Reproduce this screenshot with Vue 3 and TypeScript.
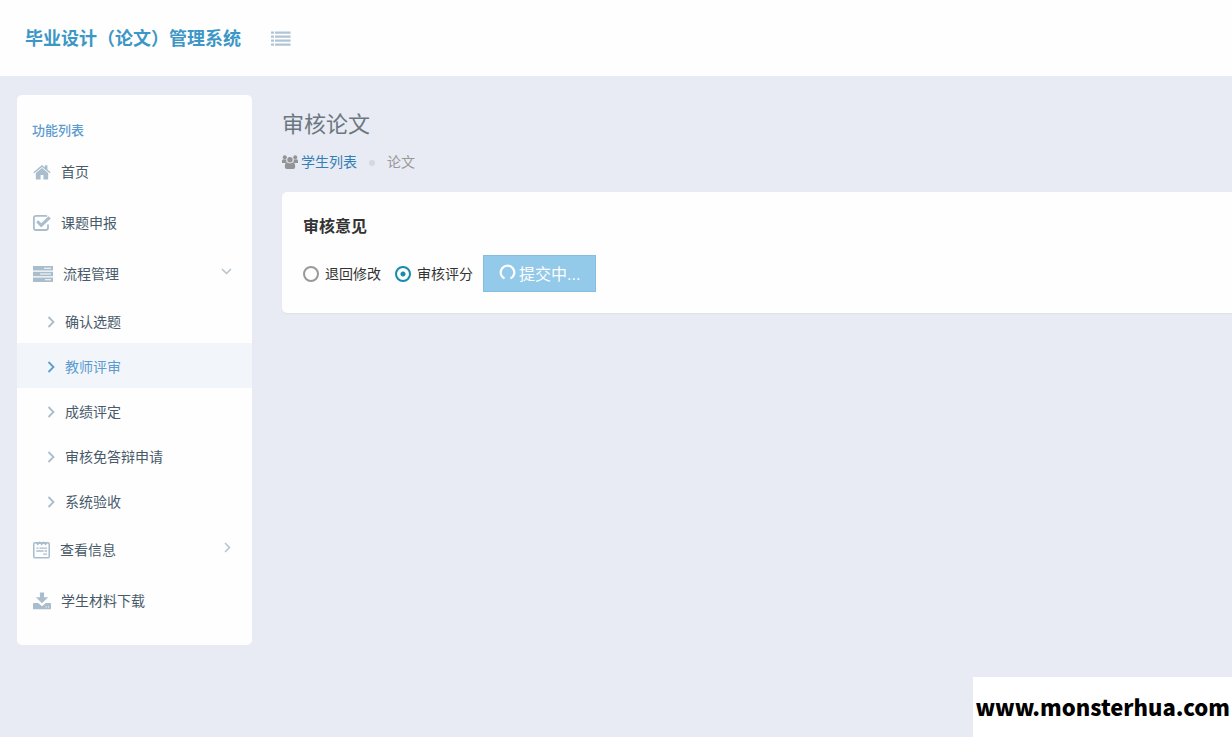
<script setup lang="ts">
import { ref } from 'vue'

interface SubItem {
  label: string
  active?: boolean
}

interface MenuItem {
  label: string
  icon: 'home' | 'check' | 'server' | 'note' | 'download'
  children?: SubItem[]
  open?: boolean
}

const menu = ref<MenuItem[]>([
  { label: '首页', icon: 'home' },
  { label: '课题申报', icon: 'check' },
  {
    label: '流程管理',
    icon: 'server',
    open: true,
    children: [
      { label: '确认选题' },
      { label: '教师评审', active: true },
      { label: '成绩评定' },
      { label: '审核免答辩申请' },
      { label: '系统验收' },
    ],
  },
  { label: '查看信息', icon: 'note', children: [], open: false },
  { label: '学生材料下载', icon: 'download' },
])

const decision = ref<'return' | 'score'>('score')
</script>

<template>
  <div class="page">
    <header class="topbar">
      <a class="brand" href="#">毕业设计（论文）管理系统</a>
      <button class="toggle" type="button" aria-label="切换菜单">
        <svg width="20" height="16" viewBox="0 0 20 16">
          <path d="M0 .5h3v2.300H0zM4 .5h15.500v2.300H4zM0 4.500h3v2.300H0zM4 4.500h15.500v2.300H4zM0 8.500h3v2.300H0zM4 8.500h15.500v2.300H4zM0 12.500h3v2.300H0zM4 12.500h15.500v2.300H4z" />
        </svg>
      </button>
    </header>

    <div class="body">
      <nav class="sidebar">
        <h2 class="side-title">功能列表</h2>
        <ul class="menu">
          <li v-for="item in menu" :key="item.label">
            <a class="item" href="#">
              <svg v-if="item.icon === 'home'" class="icon" width="18" height="16" viewBox="0 0 19 16">
                <path d="M9.500 3.700 3 9v6.200q0 .6.6.6H8v-4.600h3v4.600h4.400q.6 0 .6-.6V9z" />
                <path d="M.4 8.200 9.500.7l3 2.500V1h2.700v4.400l3.400 2.800-.9 1.100L9.500 2.600 1.300 9.300z" />
              </svg>
              <svg v-else-if="item.icon === 'check'" class="icon" width="18" height="16" viewBox="0 0 18 16">
                <path d="M15 9.500v3.200q0 2.300-2.300 2.300H3.200Q.9 15 .9 12.700V3.200Q.9.900 3.200.900h9.500q.8 0 1.400.3" fill="none" stroke="currentColor" stroke-width="1.800" />
                <path d="m3.200 7.300 2-2 3 3 7.300-7.100 2.300 2.200L8.200 12.600z" />
              </svg>
              <svg v-else-if="item.icon === 'server'" class="icon" width="20" height="16" viewBox="0 0 20 16">
                <path fill-rule="evenodd" d="M0 0h20v4.500H0zM11 1.700v1.100h7V1.700zM0 5.700h20v4.600H0zM7 7.500v1.100h11V7.500zM0 11.500h20V16H0zM12 13.200v1.100h6v-1.100z" />
              </svg>
              <svg v-else-if="item.icon === 'note'" class="icon" width="17" height="18" viewBox="0 0 17.600 18">
                <rect x=".8" y="1.500" width="16" height="15.500" rx="1" fill="none" stroke="currentColor" stroke-width="1.600" />
                <path d="m3 1 2 2.300L7 1l2 2.300L11 1l2 2.300L15 1M3.500 7h2.200m1 0h7.800M3.500 10h7.500m1 0h2.500M10.500 13.300h4" fill="none" stroke="currentColor" stroke-width="1.400" />
              </svg>
              <svg v-else class="icon" width="18" height="18" viewBox="0 0 19 18">
                <path d="M7.300 0h4.400v5h4.300L9.500 11.500 3 5h4.300z" />
                <path fill-rule="evenodd" d="M1 11h4.500l4 3.500 4-3.500H18q1 0 1 1v4.800q0 1-1 1H1q-1 0-1-1V12q0-1 1-1zm12.400 3.900v1h1v-1zm2.500 0v1h1v-1z" />
              </svg>
              <span>{{ item.label }}</span>
              <svg v-if="item.children" class="arrow" width="11" height="11" viewBox="0 0 11 11">
                <path :d="item.open ? 'm1 3 4.500 4.500L10 3' : 'm4 1 4.500 4.500L4 10'" />
              </svg>
            </a>
            <ul v-if="item.open" class="submenu">
              <li v-for="sub in item.children" :key="sub.label">
                <a class="sub" :class="{ active: sub.active }" href="#">
                  <svg class="chevron" width="8" height="12" viewBox="0 0 8 12"><path d="m1.500 1 5 5-5 5" /></svg>
                  <span>{{ sub.label }}</span>
                </a>
              </li>
            </ul>
          </li>
        </ul>
      </nav>

      <main class="main">
        <h1 class="title">审核论文</h1>
        <nav class="crumbs" aria-label="路径">
          <svg class="users" width="16" height="14" viewBox="0 0 16 14">
            <circle cx="2.800" cy="2.300" r="2" />
            <circle cx="13.200" cy="2.300" r="2" />
            <path d="M0 8V5.800q0-1.500 1.500-1.500l3 .3q-.8 1.800.5 3.400zM16 8V5.800q0-1.500-1.500-1.500l-3 .3q.8 1.800-.5 3.400z" />
            <circle cx="8" cy="4.700" r="2.700" />
            <path d="M5.300 7.600Q8 9.200 10.700 7.600 13.200 7.800 13.200 11.500q0 2.500-2 2.500H4.800q-2 0-2-2.500 0-3.700 2.500-3.900z" />
          </svg>
          <a class="crumb-link" href="#">学生列表</a>
          <i class="dot"></i>
          <span>论文</span>
        </nav>

        <section class="card">
          <h3 class="card-title">审核意见</h3>
          <form class="review" @submit.prevent>
            <label class="option"><input v-model="decision" type="radio" name="decision" value="return" />退回修改</label>
            <label class="option"><input v-model="decision" type="radio" name="decision" value="score" />审核评分</label>
            <button class="submit" type="submit">
              <svg width="17" height="17" viewBox="0 0 17 17"><path d="M5.500 14.600A6.800 6.800 0 1 1 11.500 14.600" /></svg>
              <span>提交中...</span>
            </button>
          </form>
        </section>
      </main>
    </div>

    <footer class="site-mark">www.monsterhua.com</footer>
  </div>
</template>

<style>
body {
  margin: 0;
  background: #e8ebf3;
}
</style>

<style scoped>
.page {
  min-height: 100vh;
  background: #e8ebf3;
  color: #333;
  font-family: "Liberation Sans", "Noto Sans CJK SC", sans-serif;
  font-size: 14px;
  line-height: 20px;
}
.page * {
  box-sizing: border-box;
}
a {
  color: inherit;
  text-decoration: none;
}
ul {
  list-style: none;
  margin: 0;
  padding: 0;
}
h1, h2, h3 {
  margin: 0;
}
svg {
  display: block;
  flex: none;
  fill: currentColor;
}
.topbar {
  display: flex;
  align-items: center;
  gap: 30px;
  height: 76px;
  padding: 2px 25px 0;
  background: #fefefe;
}
.brand {
  color: #3c97c6;
  font-size: 18px;
  font-weight: 700;
}
.toggle {
  border: 0;
  padding: 0;
  background: none;
  color: #b0c4d3;
}
.body {
  display: flex;
  align-items: flex-start;
  gap: 30px;
  padding: 19px 0 0 17px;
}
.sidebar {
  flex: none;
  width: 235px;
  padding: 21px 0 19px;
  border-radius: 5px;
  background: #fefefe;
}
.side-title {
  padding: 0 15px;
  color: #5b9bd1;
  font-size: 13px;
  font-weight: 500;
  line-height: 30px;
}
.item {
  display: flex;
  align-items: center;
  gap: 10px;
  height: 51px;
  padding: 0 20px 0 16px;
  color: #485a6a;
}
.icon {
  color: #a9bdcd;
}
.arrow {
  margin-left: auto;
  margin-bottom: 4px;
  fill: none;
  stroke: #b5c3cc;
  stroke-width: 1.5;
}
.submenu {
  margin: -1px 0 1px;
}
.sub {
  display: flex;
  align-items: center;
  gap: 10px;
  height: 45px;
  padding: 2px 0 0 30px;
  color: #485a6a;
}
.chevron {
  fill: none;
  stroke: #a9bdcd;
  stroke-width: 1.8;
}
.sub.active {
  background: #f2f6fa;
  color: #5b9bd1;
}
.sub.active .chevron {
  stroke: #5b9bd1;
}
.main {
  flex: 1;
  min-width: 0;
  padding-top: 14px;
}
.title {
  color: #6b7780;
  font-size: 22px;
  font-weight: 400;
  line-height: 32px;
}
.crumbs {
  display: flex;
  align-items: center;
  margin: 10px 0 19px;
  color: #999;
  line-height: 22px;
}
.users {
  color: #929595;
}
.crumb-link {
  margin-left: 3px;
  color: #337fb5;
}
.dot {
  width: 6px;
  height: 6px;
  margin: 2px 12px 0;
  border-radius: 50%;
  background: #d3d8e3;
}
.card {
  padding: 23px 21px 21px;
  border-radius: 5px 0 0 5px;
  background: #fefefe;
  box-shadow: 0 1px 1px #dde1e8;
}
.card-title {
  color: #333;
  font-size: 16px;
  font-weight: 700;
  line-height: 24px;
}
.review {
  display: flex;
  align-items: center;
  gap: 10px;
  margin-top: 16px;
}
.option {
  display: flex;
  align-items: center;
  gap: 6px;
}
.option:first-child {
  margin-right: 4px;
}
.option input {
  appearance: none;
  width: 16px;
  height: 16px;
  margin: 0;
  border: 2px solid #999;
  border-radius: 50%;
}
.option input:checked {
  border-color: #168bae;
  background: radial-gradient(circle, #168bae 2px, transparent 3px);
}
.submit {
  display: flex;
  align-items: center;
  gap: 3px;
  height: 37px;
  padding: 2px 15px 0;
  border: 1px solid #86bde2;
  background: #93c9e9;
  color: #fff;
  font: inherit;
  font-size: 16px;
}
.submit svg {
  margin-bottom: 4px;
  fill: none;
  stroke: #fff;
  stroke-width: 2.2;
}
.site-mark {
  position: fixed;
  right: 0;
  bottom: 0;
  height: 60px;
  padding: 0 2px;
  background: #fff;
  color: #000;
  font-family: "Noto Sans CJK SC", sans-serif;
  font-size: 22px;
  font-weight: 900;
  line-height: 58px;
}
</style>
